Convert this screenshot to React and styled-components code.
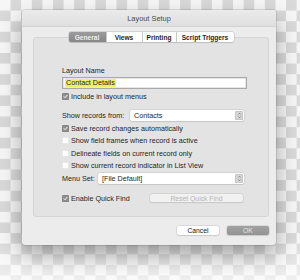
import React from 'react';
import styled, { createGlobalStyle } from 'styled-components';

const GlobalStyle = createGlobalStyle`
  html, body {
    margin: 0;
    padding: 0;
  }
  body {
    width: 300px;
    height: 280px;
    overflow: hidden;
    font-family: "Liberation Sans", Arial, sans-serif;
    background:
      linear-gradient(rgba(255,255,255,0) 85%, rgba(255,255,255,0.6) 100%),
      repeating-conic-gradient(#d9d9d9 0% 25%, #f6f6f6 0% 50%) 0 0 / 21.2px 21.2px;
  }
`;

const Page = styled.div`
  padding: 10px 0 0 22px;
`;

const Window = styled.div`
  width: 254px;
  height: 235px;
  background: #ececec;
  border-radius: 3px;
  box-shadow: 0 0 0 0.5px rgba(0,0,0,0.2), 0 10px 22px rgba(0,0,0,0.34);
  display: flex;
  flex-direction: column;
`;

const TitleBar = styled.div`
  height: 16px;
  display: flex;
  align-items: center;
  justify-content: center;
  font-size: 7.4px;
  color: #4a4a4a;
  background: linear-gradient(#ebebeb, #dfdfdf);
  border-bottom: 1px solid #d2d2d2;
  border-radius: 3px 3px 0 0;
`;

const Content = styled.div`
  padding: 0 7px 0 11px;
  display: flex;
  flex-direction: column;
`;

const Tabs = styled.div`
  margin-top: 5px;
  align-self: center;
  display: flex;
  height: 10px;
  border-radius: 2px;
  box-shadow: 0 0 0 0.5px #bdbdbd, 0 0.5px 1px rgba(0,0,0,0.15);
  position: relative;
  z-index: 1;
  overflow: hidden;
`;

const Tab = styled.div`
  width: ${p => p.w}px;
  display: flex;
  align-items: center;
  justify-content: center;
  font-size: 6.6px;
  font-weight: bold;
  color: ${p => (p.active ? '#eeeeee' : '#1e1e1e')};
  background: ${p => (p.active ? 'linear-gradient(#9c9c9c, #868686)' : '#ffffff')};
  border-left: ${p => (p.first ? 'none' : '0.5px solid #c8c8c8')};
`;

const GroupBox = styled.div`
  margin-top: -5px;
  height: 180px;
  box-sizing: border-box;
  border: 1px solid #d5d5d5;
  border-radius: 3px;
  background: #e3e3e3;
  padding: 27px 0 0 28px;
  display: flex;
  flex-direction: column;
`;

const Column = styled.div`
  width: 185px;
  display: flex;
  flex-direction: column;
  font-size: 7.2px;
  color: #1f1f1f;
`;

const Label = styled.div`
  height: 10px;
  display: flex;
  align-items: center;
`;

const TextField = styled.div`
  margin-top: 2px;
  height: 12px;
  box-sizing: border-box;
  background: #fff;
  border: 1px solid #a9a9a9;
  box-shadow: inset 0 0 0 0.5px #d0d0d0;
  display: flex;
  align-items: center;
  padding-left: 2px;
`;

const Highlight = styled.span`
  background: #f3ec6c;
  padding: 0 1px;
  line-height: 8px;
`;

const Row = styled.div`
  height: ${p => p.h || 12.5}px;
  margin-top: ${p => p.mt || 0}px;
  padding-right: ${p => p.pr || 0}px;
  display: flex;
  align-items: center;
`;

const Check = styled.span`
  width: 7px;
  height: 7px;
  flex: none;
  margin-right: 2px;
  border-radius: 1.5px;
  display: flex;
  align-items: center;
  justify-content: center;
  background: ${p => (p.checked ? '#8f8f8f' : '#ffffff')};
  box-shadow: inset 0 0 0 0.5px ${p => (p.checked ? '#7a7a7a' : '#d2d2d2')};
`;

const FieldLabel = styled.span`
  width: ${p => p.w}px;
  flex: none;
`;

const Popup = styled.div`
  flex: 1;
  margin-right: 3px;
  height: 11px;
  background: #fff;
  border-radius: 2px;
  box-shadow: 0 0 0 0.5px #c6c6c6, 0 0.5px 1px rgba(0,0,0,0.12);
  display: flex;
  align-items: center;
  padding-left: 4px;
`;

const PopupText = styled.span`
  flex: 1;
`;

const Stepper = styled.span`
  width: 8px;
  height: 9px;
  margin-right: 1px;
  border-radius: 1.5px;
  background: #d6d6d6;
  box-shadow: inset 0 0 0 0.5px #b8b8b8;
  display: flex;
  align-items: center;
  justify-content: center;
`;

const Button = styled.div`
  width: ${p => p.w}px;
  height: ${p => p.h || 9}px;
  border-radius: 2px;
  display: flex;
  align-items: center;
  justify-content: center;
  font-size: 6.8px;
  color: ${p => p.fg};
  background: ${p => p.bg};
  box-shadow: 0 0 0 0.5px #c8c8c8, 0 0.5px 1px rgba(0,0,0,0.12);
  margin-left: ${p => (p.push ? 'auto' : '0')};
`;

const Footer = styled.div`
  margin-top: 9px;
  display: flex;
  justify-content: flex-end;
  gap: 8px;
`;

const CheckMark = () => (
  <svg width="5" height="5" viewBox="0 0 10 10">
    <path d="M2 5.2 L4.2 7.5 L8.2 2.5" fill="none" stroke="#fff" strokeWidth="1.8" strokeLinecap="round" strokeLinejoin="round" />
  </svg>
);

const Arrows = () => (
  <svg width="5" height="7" viewBox="0 0 10 14">
    <path d="M2.5 5 L5 2.5 L7.5 5 M2.5 9 L5 11.5 L7.5 9" fill="none" stroke="#6d6d6d" strokeWidth="1.5" />
  </svg>
);

const CheckRow = ({ checked, children, h, mt, pr }) => (
  <Row h={h} mt={mt} pr={pr}>
    <Check checked={checked}>{checked && <CheckMark />}</Check>
    {children}
  </Row>
);

export default function App() {
  return (
    <>
      <GlobalStyle />
      <Page>
        <Window>
          <TitleBar>Layout Setup</TitleBar>
          <Content>
            <Tabs>
              <Tab w={37} active first>General</Tab>
              <Tab w={35}>Views</Tab>
              <Tab w={33}>Printing</Tab>
              <Tab w={57}>Script Triggers</Tab>
            </Tabs>
            <GroupBox>
              <Column>
                <Label>Layout Name</Label>
                <TextField>
                  <Highlight>Contact Details</Highlight>
                </TextField>
                <CheckRow checked h={10} mt={2}>Include in layout menus</CheckRow>
                <Row h={12} mt={8}>
                  <FieldLabel w={68}>Show records from:</FieldLabel>
                  <Popup>
                    <PopupText>Contacts</PopupText>
                    <Stepper><Arrows /></Stepper>
                  </Popup>
                </Row>
                <CheckRow checked mt={1}>Save record changes automatically</CheckRow>
                <CheckRow>Show field frames when record is active</CheckRow>
                <CheckRow>Delineate fields on current record only</CheckRow>
                <CheckRow>Show current record indicator in List View</CheckRow>
                <Row h={12}>
                  <FieldLabel w={36}>Menu Set:</FieldLabel>
                  <Popup>
                    <PopupText>[File Default]</PopupText>
                    <Stepper><Arrows /></Stepper>
                  </Popup>
                </Row>
                <CheckRow checked h={10} mt={9} pr={4}>
                  Enable Quick Find
                  <Button w={93} h={8} push bg="#f1f1f1" fg="#b4b4b4">
                    Reset Quick Find
                  </Button>
                </CheckRow>
              </Column>
            </GroupBox>
            <Footer>
              <Button w={42} bg="#ffffff" fg="#222">Cancel</Button>
              <Button w={42} bg="linear-gradient(#a2a2a2, #939393)" fg="#e6e6e6">OK</Button>
            </Footer>
          </Content>
        </Window>
      </Page>
    </>
  );
}
